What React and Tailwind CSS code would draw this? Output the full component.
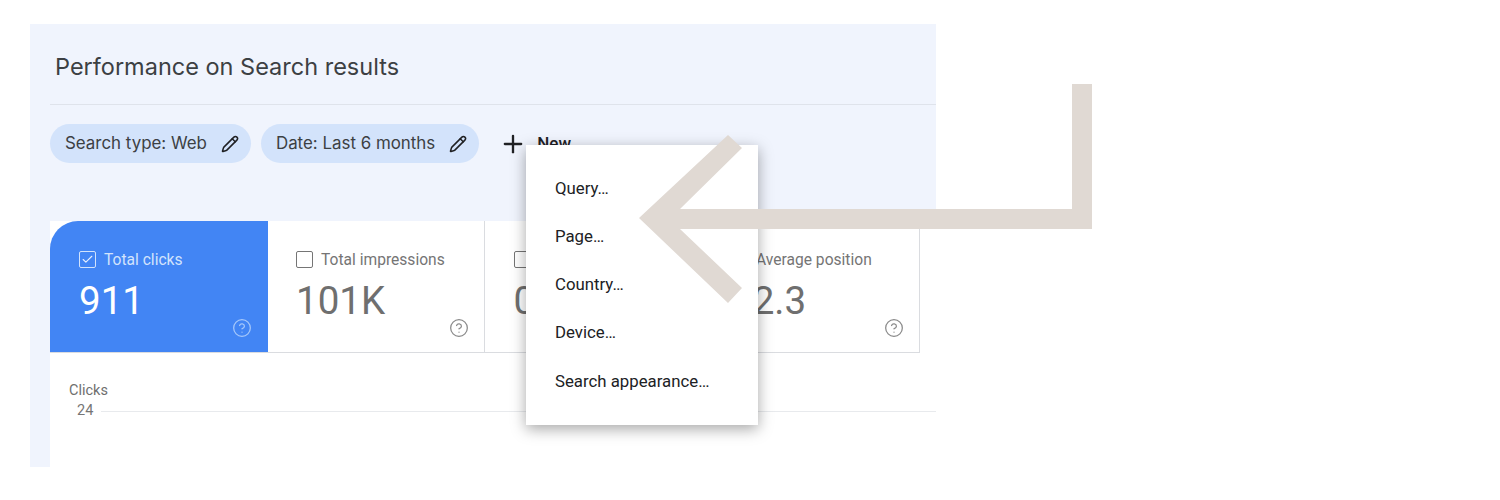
import { Check, CircleHelp, Pencil, Plus } from "lucide-react";

const cards = [
  { label: "Total clicks", value: "911", active: true },
  { label: "Total impressions", value: "101K" },
  { label: "Average CTR", value: "0.9%" },
  { label: "Average position", value: "12.3" },
];

const menuItems = ["Query…", "Page…", "Country…", "Device…", "Search appearance…"];

function Chip({ label }) {
  return (
    <div className="flex h-[39px] items-center gap-[14px] rounded-full bg-[#d3e3fb] pl-[15px] pr-[12px] font-['Inter',sans-serif] text-[16.9px] text-[#3c4043]">
      <span>{label}</span>
      <Pencil size={18} strokeWidth={2} className="text-[#202124]" />
    </div>
  );
}

function MetricCard({ label, value, active }) {
  return (
    <div
      className={`flex flex-col pt-[30px] pb-[14px] ${
        active
          ? "rounded-tl-[28px] bg-[#4285f4] pl-[29px] pr-[16px] text-white"
          : "border-r border-[#dadce0] bg-white pl-[28.5px] pr-[15px] text-[#6f6f6f]"
      }`}
    >
      <div className="flex h-[18px] items-center gap-[8px] text-[15.6px] whitespace-nowrap">
        <span
          className={`-mt-px flex size-[17px] shrink-0 items-center justify-center rounded-[2px] border-[1.5px] ${
            active ? "border-[#d2e3fc]" : "border-[#757575]"
          }`}
        >
          {active && <Check size={13} strokeWidth={2} className="text-[#e8f0fe]" />}
        </span>
        <span className={`mt-[2px] ${active ? "text-[#d2e3fc]" : "text-[#757575]"}`}>{label}</span>
      </div>
      <div className="mt-[14px] text-[38.5px] leading-[35px]">{value}</div>
      <CircleHelp
        size={20}
        strokeWidth={1.5}
        className={`mt-auto shrink-0 self-end ${active ? "text-[#a6c8fa]" : "text-[#8a8a8a]"}`}
      />
    </div>
  );
}

export default function App() {
  return (
    <div className="h-[500px] w-[1500px] overflow-hidden bg-white pl-[30px] pt-[24px] font-['Roboto',sans-serif]">
      <div className="relative flex h-[443px] w-[906px] flex-col bg-[#f0f4fd]">
        {/* header */}
        <div className="ml-[20px] flex h-[81px] items-center border-b border-[#dfe3eb] pl-[5px] pt-[6px]">
          <h1 className="font-['Inter',sans-serif] text-[23.5px] font-normal text-[#3c4043]">
            Performance on Search results
          </h1>
        </div>

        {/* filter chips */}
        <div className="ml-[20px] mt-[19px] flex items-center gap-[10px]">
          <Chip label="Search type: Web" />
          <Chip label="Date: Last 6 months" />
          <div className="ml-[10px] flex items-center gap-[10px] text-[17px] font-medium text-[#202124]">
            <Plus size={28} strokeWidth={2} />
            <span>New</span>
          </div>
        </div>

        {/* metrics + chart */}
        <div className="ml-[20px] mt-[58px] flex-1 bg-white">
          <div className="grid h-[132px] w-[870px] grid-cols-4 border-b border-[#dadce0]">
            {cards.map((card) => (
              <MetricCard key={card.label} {...card} />
            ))}
          </div>
          <div className="pl-[19px] pt-[29px] text-[14.5px] leading-[18px] text-[#6f6f6f]">
            Clicks
          </div>
          <div className="mt-[2px] flex items-center gap-[8px] pl-[27px] text-[14.5px] leading-[18px] text-[#757575]">
            <span>24</span>
            <div className="h-px flex-1 bg-[#e8eaed]" />
          </div>
        </div>

        {/* dropdown */}
        <div className="absolute left-[496px] top-[121px] h-[280px] w-[232px] bg-white pt-[19px] shadow-[0_4px_14px_rgba(0,0,0,0.35)]">
          {menuItems.map((item) => (
            <div key={item} className="flex h-[48.25px] items-center pl-[29px] text-[16.8px] text-[#202124]">
              {item}
            </div>
          ))}
        </div>

        {/* arrow annotation */}
        <svg
          className="absolute left-[609px] top-[60px]"
          width="453"
          height="219"
          viewBox="639 84 453 219"
        >
          <path
            d="M639 218 L728 135 L742 148 L680 209 L1072 209 L1072 84 L1092 84 L1092 229 L680 229 L742 288 L728 303 Z"
            fill="#e0d9d3"
          />
        </svg>
      </div>
    </div>
  );
}
